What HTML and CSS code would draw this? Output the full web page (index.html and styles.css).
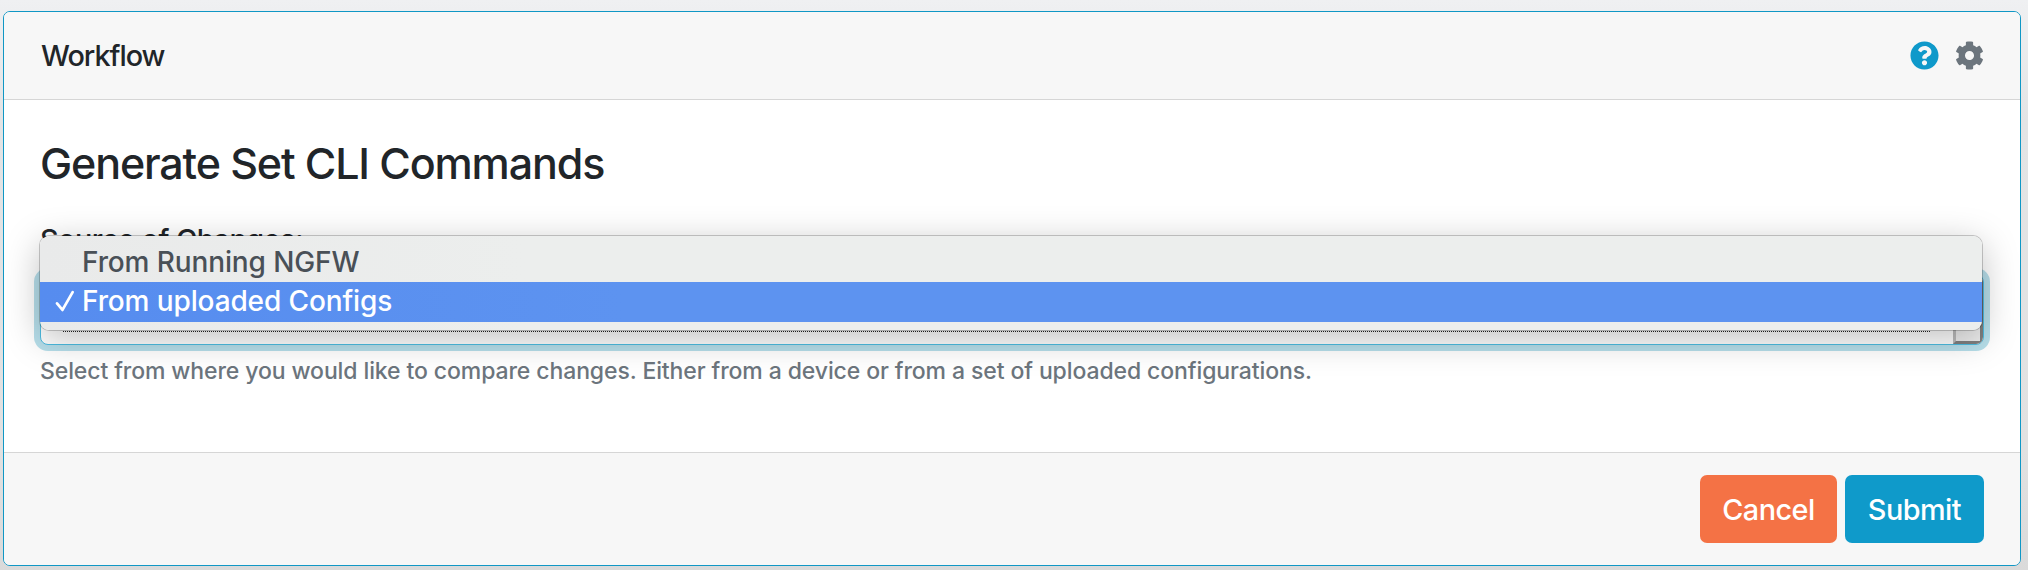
FILE: index.html
```
<!DOCTYPE html>
<html lang="en">
<head>
<meta charset="utf-8">
<title>Workflow</title>
<link rel="stylesheet" href="styles.css">
</head>
<body>
<main class="card">
  <header class="card-header">
    <span class="card-title">Workflow</span>
    <div class="tools">
      <svg class="icon help-icon" viewBox="0 0 512 512"><path fill="currentColor" d="M504 256c0 137-111 248-248 248S8 393 8 256C8 119.100 119 8 256 8s248 111.100 248 248zM262.700 90c-54.500 0-89.300 23-116.500 63.800-3.500 5.300-2.400 12.400 2.700 16.300l34.700 26.300c5.200 3.900 12.600 3 16.700-2.100 17.900-22.700 30.100-35.800 57.300-35.800 20.400 0 45.700 13.100 45.700 33 0 15-12.400 22.700-32.500 34C247.100 238.500 216 254.900 216 296v4c0 6.600 5.400 12 12 12h56c6.600 0 12-5.400 12-12v-1.300c0-28.500 83.200-29.600 83.200-106.700 0-58-60.200-102-116.500-102zM256 338c-25.400 0-46 20.600-46 46s20.600 46 46 46 46-20.600 46-46-20.600-46-46-46z"/></svg>
      <svg class="icon gear-icon" viewBox="0 0 512 512"><path fill="currentColor" d="M487.400 315.700l-42.600-24.600c4.300-23.200 4.300-47 0-70.200l42.600-24.600c4.900-2.800 7.100-8.600 5.500-14-11.100-35.600-30-67.800-54.700-94.600-3.800-4.100-10-5.100-14.800-2.300L380.800 110c-17.900-15.400-38.500-27.300-60.800-35.100V25.800c0-5.600-3.900-10.500-9.400-11.700-36.700-8.200-74.300-7.800-109.200 0-5.500 1.200-9.400 6.100-9.400 11.700V75c-22.200 7.900-42.800 19.800-60.800 35.100L88.700 85.500c-4.900-2.800-11-1.900-14.800 2.300-24.700 26.700-43.600 58.900-54.700 94.600-1.700 5.400.6 11.200 5.500 14L67.300 221c-4.300 23.200-4.300 47 0 70.200l-42.600 24.600c-4.900 2.800-7.100 8.600-5.500 14 11.100 35.600 30 67.800 54.700 94.600 3.800 4.100 10 5.100 14.800 2.300l42.600-24.600c17.900 15.400 38.500 27.300 60.800 35.100v49.200c0 5.600 3.900 10.500 9.400 11.700 36.700 8.200 74.300 7.800 109.200 0 5.500-1.200 9.400-6.100 9.400-11.700v-49.200c22.200-7.900 42.800-19.800 60.800-35.100l42.600 24.600c4.900 2.800 11 1.900 14.800-2.300 24.700-26.700 43.600-58.900 54.700-94.600 1.500-5.500-.7-11.300-5.600-14.100zM256 336c-44.100 0-80-35.900-80-80s35.900-80 80-80 80 35.900 80 80-35.900 80-80 80z"/></svg>
    </div>
  </header>
  <section class="card-body">
    <h1 class="heading">Generate Set CLI Commands</h1>
    <div class="field">
      <div class="label">Source of Changes:</div>
      <div class="select"><span class="focus-line"></span><span class="select-button"></span></div>
      <div class="menu">
        <div class="option">From Running NGFW</div>
        <div class="option selected">
          <svg class="check" viewBox="0 0 18 21"><path d="M1.700 12.200 6.700 18.200 16 2" fill="none" stroke="currentColor" stroke-width="2.500" stroke-linecap="round" stroke-linejoin="round"/></svg>
          <span class="option-text">From uploaded Configs</span>
        </div>
      </div>
      <div class="help">Select from where you would like to compare changes. Either from a device or from a set of uploaded configurations.</div>
    </div>
  </section>
  <footer class="card-footer">
    <div class="button cancel">Cancel</div>
    <div class="button submit">Submit</div>
  </footer>
</main>
</body>
</html>
```
FILE: styles.css
```
* { box-sizing: border-box; }
body {
  margin: 0;
  height: 570px;
  overflow: hidden;
  padding: 11px 7px 0 3px;
  background: linear-gradient(#eff0f2 0, #e3e4e5 120px, #e1e1e1 450px, #dadada 570px);
  font-family: Inter, "Liberation Sans", sans-serif;
  font-weight: 450;
  color: #212529;
  white-space: nowrap;
}
.card {
  display: flex;
  flex-direction: column;
  height: 555px;
  border: 1px solid #1097c5;
  border-radius: 7px;
  background: #fff;
  overflow: hidden;
}
.card-header {
  display: flex;
  align-items: center;
  justify-content: space-between;
  height: 88px;
  padding: 0 36px 0 37px;
  background: #f7f7f7;
  border-bottom: 1px solid #d6d6d6;
}
.card-title { font-size: 28.8px; letter-spacing: -1px; }
.tools { display: flex; gap: 16px; padding-bottom: 1px; }
.icon { width: 29px; height: 29px; }
.help-icon { color: #0f99ca; }
.gear-icon { color: #6c757d; }
.card-body { flex: 1; padding: 37px 36px 0; }
.heading {
  margin: 0;
  font-size: 43px;
  line-height: 52px;
  font-weight: 550;
  letter-spacing: -1.13px;
}
.field { position: relative; padding-top: 29px; }
.label { font-size: 28.8px; line-height: 43px; height: 56px; letter-spacing: -0.5px; }
.select {
  display: flex;
  justify-content: space-between;
  align-items: flex-end;
  height: 71px;
  border: 1px solid #4dbde2;
  border-radius: 8px;
  box-shadow: 0 0 0 6px #b7dfeb;
  background: #fff;
  overflow: hidden;
}
.focus-line { width: 1867px; margin: 0 0 12px 22px; border-bottom: 1px dotted #222; }
.select-button {
  width: 30px;
  height: 69px;
  background: #ededed;
  border: 3px solid #808080;
  border-left-color: #bcbcbc;
}
.menu {
  position: absolute;
  top: 47px;
  left: 0;
  width: 1942px;
  height: 94px;
  padding-top: 6px;
  border-radius: 9px;
  background: linear-gradient(90deg, #e9eaea, #eceeed 25%, #eceeed);
  box-shadow: 0 0 0 1px rgba(0, 0, 0, .2), 0 8px 36px rgba(0, 0, 0, .26);
}
.option {
  height: 40px;
  padding-left: 42px;
  font-size: 28px;
  line-height: 40px;
  letter-spacing: -0.12px;
  color: #495057;
}
.selected {
  display: flex;
  align-items: center;
  padding-left: 14px;
  padding-bottom: 2px;
  color: #fff;
  background: linear-gradient(90deg, #568cef, #5d93f0 30%, #5d93f0);
}
.check { width: 22px; height: 23px; margin-right: 6px; }
.help { margin-top: 9px; font-size: 23px; line-height: 34px; letter-spacing: -0.1px; color: #6c757d; }
.card-footer {
  display: flex;
  justify-content: flex-end;
  gap: 8px;
  height: 113px;
  padding: 21px 36px 0;
  background: #f7f7f7;
  border-top: 1px solid #d6d6d6;
}
.button {
  height: 68px;
  border-radius: 7px;
  color: #fff;
  font-size: 28.8px;
  line-height: 70px;
  letter-spacing: -0.5px;
  text-align: center;
  transform: translateY(1px);
}
.cancel { width: 137px; background: #f47245; }
.submit { width: 139px; background: #0f9aca; }
```
